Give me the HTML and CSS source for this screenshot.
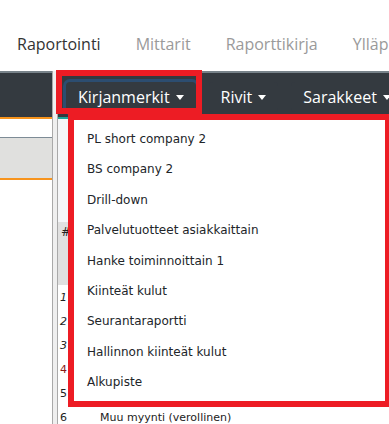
FILE: index.html
```html
<!DOCTYPE html>
<html lang="fi">
<head>
    <meta charset="UTF-8">
    <meta name="viewport" content="width=device-width, initial-scale=1.0">
    <title>Raportointi</title>
    <link rel="stylesheet" href="styles.css">
</head>
<body>
    <div class="tabs">
        <a class="active" href="#">Raportointi</a>
        <a href="#">Mittarit</a>
        <a href="#">Raporttikirja</a>
        <a href="#">Ylläpito</a>
    </div>

    <div class="workspace">
        <div class="side">
            <div class="side-bar"></div>
            <div class="side-gap"></div>
            <div class="side-filter"></div>
        </div>
        <div class="splitter"></div>
        <div class="report">
            <div class="toolbar">
                <button class="tool focused">Kirjanmerkit</button>
                <button class="tool">Rivit</button>
                <button class="tool">Sarakkeet</button>
            </div>
            <div class="report-top"></div>
            <div class="report-head">#</div>
            <div class="row"><span class="num italic">1</span></div>
            <div class="row"><span class="num italic">2</span></div>
            <div class="row"><span class="num italic">3</span></div>
            <div class="row"><span class="num red">4</span></div>
            <div class="row"><span class="num">5</span></div>
            <div class="row"><span class="num">6</span><span class="label">Muu myynti (verollinen)</span></div>
        </div>
    </div>

    <!-- avattu kirjanmerkkivalikko -->
    <div class="menu">
        <a href="#">PL short company 2</a>
        <a href="#">BS company 2</a>
        <a href="#">Drill-down</a>
        <a href="#">Palvelutuotteet asiakkaittain</a>
        <a href="#">Hanke toiminnoittain 1</a>
        <a href="#">Kiinteät kulut</a>
        <a href="#">Seurantaraportti</a>
        <a href="#">Hallinnon kiinteät kulut</a>
        <a href="#">Alkupiste</a>
    </div>

    <!-- punainen korostus napin ympärillä -->
    <div class="mark"></div>
</body>
</html>
```

FILE: styles.css
```css
body {
    margin: 0;
    padding: 0;
    background-color: white;
    font-family: "Open Sans", Arial, sans-serif;
    overflow: hidden;
    height: 424px;
}

.tabs {
    display: flex;
    height: 71px;
    box-sizing: border-box;
    padding-top: 31px;
    white-space: nowrap;
    overflow: hidden;
}

.tabs a {
    color: #9a9a9a;
    text-decoration: none;
    font-size: 16px;
    line-height: 26px;
    padding: 0 18px 0 17px;
}

.tabs a.active {
    color: #333;
}

.workspace {
    display: flex;
    height: 353px;
}

.side {
    width: 52px;
    border-top: 2px solid #78838a;
}

.side-bar {
    height: 44px;
    background-color: #343a40;
    border-bottom: 2px solid #f7941d;
}

.side-gap {
    height: 18px;
}

.side-filter {
    height: 40px;
    background-color: #e0e0de;
    border-top: 1px solid #7d8b96;
    border-bottom: 2px solid #f7941d;
}

.splitter {
    width: 6px;
    box-sizing: border-box;
    background-color: #efefef;
    border-left: 1px solid #a9a9a9;
    border-right: 1px solid #a9a9a9;
}

.report {
    flex: 1;
    min-width: 0;
    border-top: 2px solid #78838a;
    background-color: white;
}

.toolbar {
    display: flex;
    align-items: center;
    gap: 13px;
    height: 44px;
    padding-left: 8px;
    background-color: #343a40;
    border-bottom: 2px solid #1fa59a;
    white-space: nowrap;
    overflow: hidden;
}

.tool {
    flex-shrink: 0;
    background-color: #343a40;
    color: white;
    border: none;
    border-radius: 4px;
    font-family: "Open Sans", Arial, sans-serif;
    font-size: 16px;
    height: 30px;
    padding: 0 12px;
    margin-top: 4px;
}

.tool::after {
    content: "";
    display: inline-block;
    margin-left: 6px;
    vertical-align: 3px;
    border-top: 5px solid white;
    border-left: 4.5px solid transparent;
    border-right: 4.5px solid transparent;
}

.tool.focused {
    box-shadow: 0 0 0 3px #2c4d70;
}

.report-top {
    height: 103px;
    background-color: #f5f6f8;
}

.report-head {
    height: 63px;
    background-color: #e0e0e0;
    font-family: "DejaVu Sans", sans-serif;
    font-size: 12px;
    padding-left: 3px;
    box-sizing: border-box;
    padding-top: 3px;
    color: #222;
}

.row {
    display: flex;
    height: 24px;
    align-items: center;
    font-family: "DejaVu Sans", sans-serif;
    font-size: 11px;
    color: #222;
}

.num {
    width: 40px;
    padding-left: 2px;
}

.italic {
    font-style: italic;
}

.red {
    color: #8b1a1a;
}

.menu {
    position: absolute;
    left: 68px;
    top: 114px;
    width: 321px;
    height: 293px;
    box-sizing: border-box;
    border: 6px solid #ed1c24;
    border-right-width: 4px;
    background-color: white;
    padding-top: 4px;
}

.menu a {
    display: block;
    height: 30.4px;
    line-height: 30.4px;
    padding-left: 13px;
    color: #212529;
    text-decoration: none;
    font-family: "DejaVu Sans", sans-serif;
    font-size: 12px;
    white-space: nowrap;
}

.mark {
    position: absolute;
    left: 56px;
    top: 70px;
    width: 146px;
    height: 44px;
    box-sizing: border-box;
    border: 6px solid #ed1c24;
}
```
